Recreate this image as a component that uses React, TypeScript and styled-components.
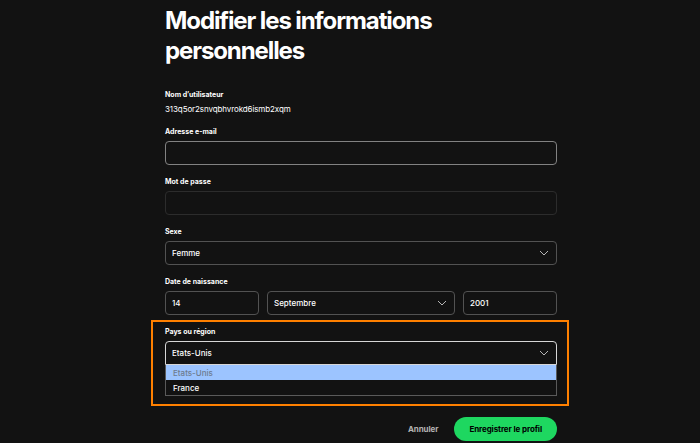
import styled, { createGlobalStyle } from "styled-components";

const GlobalStyle = createGlobalStyle`
  html, body {
    margin: 0;
    background: #121212;
  }
  body {
    font-family: Inter, "Liberation Sans", sans-serif;
    color: #fff;
  }
`;

const Page = styled.main`
  width: 392px;
  margin-left: 165px;
  padding-top: 6px;
  display: flex;
  flex-direction: column;
`;

const Title = styled.h1`
  margin: 0;
  font-size: 24px;
  line-height: 30px;
  font-weight: 700;
  letter-spacing: -1.1px;
`;

const Form = styled.form`
  margin-top: 24px;
  display: flex;
  flex-direction: column;
  gap: 12px;
`;

const Field = styled.div`
  display: flex;
  flex-direction: column;
  gap: 4px;
`;

const Label = styled.label`
  font-size: 7px;
  line-height: 10px;
  font-weight: 700;
`;

const Value = styled.div`
  font-size: 8px;
  line-height: 11px;
  letter-spacing: -0.1px;
`;

const Input = styled.input<{ $border: string }>`
  box-sizing: border-box;
  width: 100%;
  height: 24px;
  margin: 0;
  padding: 0 6px;
  border: 1px solid ${(p) => p.$border};
  border-radius: 4px;
  background: transparent;
  color: #fff;
  font-family: inherit;
  font-size: 8px;
  font-weight: 500;
  outline: none;
`;

const Select = styled.div<{ $border: string; $open?: boolean }>`
  box-sizing: border-box;
  height: 24px;
  padding: 0 7px 0 6px;
  display: flex;
  align-items: center;
  justify-content: space-between;
  border: 1px solid ${(p) => p.$border};
  border-radius: ${(p) => (p.$open ? "4px 4px 0 0" : "4px")};
  font-size: 8px;
  font-weight: 500;
`;

const DateRow = styled.div`
  display: grid;
  grid-template-columns: 1fr 2fr 1fr;
  gap: 8px;
`;

const Highlight = styled.section`
  margin: -7px -12px 0 -14px;
  padding: 5px 10px 8px 12px;
  border: 2px solid #ff8000;
`;

const OptionList = styled.ul`
  margin: 0;
  padding: 0;
  list-style: none;
  border: 1px solid #5a5a5a;
  border-top: none;
`;

const Option = styled.li<{ $active?: boolean }>`
  height: 15px;
  padding: 0 7px;
  display: flex;
  align-items: center;
  font-size: 8px;
  font-weight: 500;
  background: ${(p) => (p.$active ? "#9cc4ff" : "#121212")};
  color: ${(p) => (p.$active ? "#6d7b8e" : "#fff")};
`;

const Actions = styled.div`
  margin-top: 11px;
  display: flex;
  justify-content: flex-end;
  align-items: center;
  gap: 16px;
`;

const CancelButton = styled.button`
  padding: 0;
  border: none;
  background: none;
  color: #b3b3b3;
  font-family: inherit;
  font-size: 8px;
  font-weight: 700;
  letter-spacing: -0.1px;
`;

const SaveButton = styled.button`
  height: 24px;
  padding: 0 15px;
  border: none;
  border-radius: 12px;
  background: #1ed760;
  color: #000;
  font-family: inherit;
  font-size: 8px;
  font-weight: 700;
  letter-spacing: -0.1px;
`;

const Chevron = () => (
  <svg width="10" height="6" viewBox="0 0 10 6" fill="none">
    <path d="M1 1l4 4 4-4" stroke="#c8c8c8" strokeWidth="0.9" />
  </svg>
);

export default function App() {
  return (
    <>
      <GlobalStyle />
      <Page>
        <Title>
          Modifier les informations
          <br />
          personnelles
        </Title>
        <Form onSubmit={(e) => e.preventDefault()}>
          <Field>
            <Label>Nom d’utilisateur</Label>
            <Value>313q5or2snvqbhvrokd6ismb2xqm</Value>
          </Field>
          <Field>
            <Label>Adresse e-mail</Label>
            <Input $border="#828282" type="email" />
          </Field>
          <Field>
            <Label>Mot de passe</Label>
            <Input $border="#2c2c2c" type="password" disabled />
          </Field>
          <Field>
            <Label>Sexe</Label>
            <Select $border="#525252">
              Femme
              <Chevron />
            </Select>
          </Field>
          <Field>
            <Label>Date de naissance</Label>
            <DateRow>
              <Input $border="#525252" defaultValue="14" />
              <Select $border="#525252">
                Septembre
                <Chevron />
              </Select>
              <Input $border="#525252" defaultValue="2001" />
            </DateRow>
          </Field>
          <Highlight>
            <Field>
              <Label>Pays ou région</Label>
              <div>
                <Select $border="#d6d6d6" $open>
                  Etats-Unis
                  <Chevron />
                </Select>
                <OptionList>
                  <Option $active>Etats-Unis</Option>
                  <Option>France</Option>
                </OptionList>
              </div>
            </Field>
          </Highlight>
        </Form>
        <Actions>
          <CancelButton type="button">Annuler</CancelButton>
          <SaveButton type="button">Enregistrer le profil</SaveButton>
        </Actions>
      </Page>
    </>
  );
}
